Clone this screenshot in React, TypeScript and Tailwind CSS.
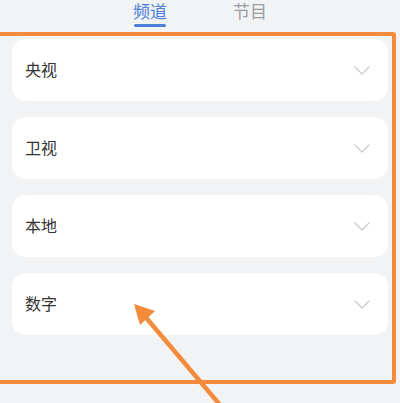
import React from 'react'

const groups = ['央视', '卫视', '本地', '数字']

function Chevron() {
  return (
    <svg width="16" height="9" viewBox="0 0 16 9" fill="none">
      <polyline points="1,1 8,8 15,1" stroke="#c9cbd0" strokeWidth="1.3" strokeLinecap="round" strokeLinejoin="round" />
    </svg>
  )
}

export default function App() {
  return (
    <div
      className="relative w-[400px] h-[403px] overflow-hidden bg-[#f2f3f5]"
      style={{ fontFamily: '"Noto Sans", "Noto Sans CJK SC", sans-serif' }}
    >
      {/* tabs */}
      <div className="flex justify-center gap-[66px] h-[39px]">
        <div className="flex flex-col items-center">
          <span className="text-[17px] leading-[23px] text-[#4b7fd8]">频道</span>
          <span className="w-[32px] h-[3px] rounded-full bg-[#4b7fd8] mt-[1px]" />
        </div>
        <div className="flex flex-col items-center">
          <span className="text-[17px] leading-[23px] text-[#9a9ca2]">节目</span>
        </div>
      </div>

      {/* channel groups */}
      <div className="flex flex-col gap-4 px-3">
        {groups.map(g => (
          <div key={g} className="flex items-center justify-between h-[62px] rounded-[14px] bg-white pl-[13px] pr-[18px]">
            <span className="text-[16px] text-[#333]">{g}</span>
            <Chevron />
          </div>
        ))}
      </div>

      {/* annotation */}
      <div className="absolute left-[-12px] top-[32px] w-[408px] h-[352px] border-[4px] border-[#f38a3c] rounded-[3px] pointer-events-none" />
      <svg className="absolute inset-0 pointer-events-none" width="400" height="403" viewBox="0 0 400 403">
        <line x1="143" y1="314" x2="226" y2="412" stroke="#f38a3c" strokeWidth="4.5" />
        <polygon points="134,304 155,311 140,325" fill="#f38a3c" />
      </svg>
    </div>
  )
}
